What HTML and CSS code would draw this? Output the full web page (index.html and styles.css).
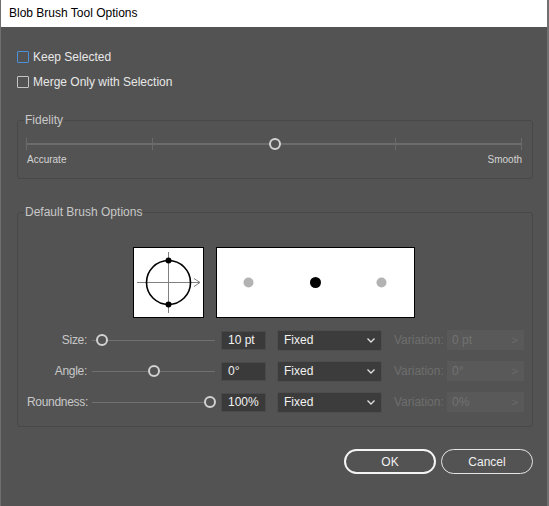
FILE: index.html
```html
<!DOCTYPE html>
<html lang="en">
<head>
    <meta charset="UTF-8">
    <title>Blob Brush Tool Options</title>
    <link rel="stylesheet" href="styles.css">
</head>
<body>
    <div class="window">
        <div class="titlebar">Blob Brush Tool Options</div>
        <div class="content">
            <label class="check-row"><span class="check focus"></span>Keep Selected</label>
            <label class="check-row"><span class="check"></span>Merge Only with Selection</label>

            <fieldset class="group fidelity">
                <legend>Fidelity</legend>
                <div class="slider wide">
                    <span class="tick" style="left: 0%"></span>
                    <span class="tick" style="left: 25.5%"></span>
                    <span class="tick" style="left: 74.5%"></span>
                    <span class="tick" style="left: 100%"></span>
                    <span class="knob" style="left: 50%"></span>
                </div>
                <div class="fid-labels">
                    <span>Accurate</span>
                    <span>Smooth</span>
                </div>
            </fieldset>

            <fieldset class="group brush">
                <legend>Default Brush Options</legend>
                <div class="previews">
                    <div class="preview shape">
                        <svg width="69" height="69" viewBox="0 0 69 69">
                            <line x1="3" y1="34.5" x2="66" y2="34.5" stroke="#808080" stroke-width="1"/>
                            <line x1="34.5" y1="4" x2="34.5" y2="65" stroke="#808080" stroke-width="1"/>
                            <polyline points="60,30.5 66,34.5 60,38.5" fill="none" stroke="#808080" stroke-width="1"/>
                            <circle cx="34.5" cy="34.5" r="22" fill="none" stroke="#000" stroke-width="1.6"/>
                            <circle cx="34.5" cy="12.5" r="3" fill="#000"/>
                            <circle cx="34.5" cy="56.5" r="3" fill="#000"/>
                        </svg>
                    </div>
                    <div class="preview strokes">
                        <svg width="197" height="69" viewBox="0 0 197 69">
                            <circle cx="31.5" cy="34.5" r="5" fill="#b3b3b3"/>
                            <circle cx="98.5" cy="34.5" r="5.5" fill="#000"/>
                            <circle cx="164.5" cy="34.5" r="5" fill="#b3b3b3"/>
                        </svg>
                    </div>
                </div>

                <div class="opt-row">
                    <span class="opt-label">Size:</span>
                    <div class="slider small"><span class="knob" style="left: 8%"></span></div>
                    <div class="field">10 pt</div>
                    <div class="select">Fixed<svg class="chev" width="8" height="5" viewBox="0 0 8 5"><polyline points="0.5,0.5 4,4 7.5,0.5" fill="none" stroke="#e0e0e0" stroke-width="1.3"/></svg></div>
                    <span class="var-label">Variation:</span>
                    <div class="var-field">0 pt<span class="arrow">&gt;</span></div>
                </div>
                <div class="opt-row">
                    <span class="opt-label">Angle:</span>
                    <div class="slider small"><span class="knob" style="left: 50.5%"></span></div>
                    <div class="field">0°</div>
                    <div class="select">Fixed<svg class="chev" width="8" height="5" viewBox="0 0 8 5"><polyline points="0.5,0.5 4,4 7.5,0.5" fill="none" stroke="#e0e0e0" stroke-width="1.3"/></svg></div>
                    <span class="var-label">Variation:</span>
                    <div class="var-field">0°<span class="arrow">&gt;</span></div>
                </div>
                <div class="opt-row">
                    <span class="opt-label">Roundness:</span>
                    <div class="slider small"><span class="knob" style="left: 96%"></span></div>
                    <div class="field">100%</div>
                    <div class="select">Fixed<svg class="chev" width="8" height="5" viewBox="0 0 8 5"><polyline points="0.5,0.5 4,4 7.5,0.5" fill="none" stroke="#e0e0e0" stroke-width="1.3"/></svg></div>
                    <span class="var-label">Variation:</span>
                    <div class="var-field">0%<span class="arrow">&gt;</span></div>
                </div>
            </fieldset>

            <div class="buttons">
                <button class="btn ok">OK</button>
                <button class="btn">Cancel</button>
            </div>
        </div>
    </div>
</body>
</html>
```

FILE: styles.css
```css
* {
    margin: 0;
    padding: 0;
    box-sizing: border-box;
}

body {
    font-family: 'Liberation Sans', Arial, sans-serif;
    font-size: 12px;
    background: #535353;
    width: 549px;
    height: 506px;
    overflow: hidden;
}

.window {
    height: 506px;
    border-left: 1px solid #6f6f6f;
    border-right: 2px solid #707070;
    background: #535353;
}

.titlebar {
    height: 27px;
    line-height: 27px;
    padding-left: 8px;
    background: #ffffff;
    color: #000000;
}

.content {
    padding: 17px 14px 0 16px;
}

.check-row {
    display: flex;
    align-items: center;
    height: 25px;
    color: #e8e8e8;
}

.check {
    width: 12px;
    height: 12px;
    margin-right: 4px;
    border: 1px solid #c4c4c4;
    border-radius: 1px;
}

.check.focus {
    border-color: #4f8fd8;
}

.group {
    border: 1px solid #484848;
    border-radius: 3px;
}

.group legend {
    margin-left: -3px;
    padding: 0 1px;
    line-height: 14px;
    color: #c8c8c8;
}

.fidelity {
    margin-top: 19px;
    padding: 10px 10px 12px 9px;
}

.slider {
    position: relative;
    height: 14px;
}

.slider::before {
    content: "";
    position: absolute;
    left: 0;
    right: 0;
    top: 6px;
    height: 2px;
    background: #6c6c6c;
}

.tick {
    position: absolute;
    top: 1px;
    width: 1px;
    height: 12px;
    margin-left: -1px;
    background: #6a6a6a;
}

.knob {
    position: absolute;
    top: 1px;
    width: 12px;
    height: 12px;
    margin-left: -6px;
    border: 2px solid #d2d2d2;
    border-radius: 50%;
    background: #535353;
}

.fid-labels {
    display: flex;
    justify-content: space-between;
    margin-top: 3px;
    font-size: 10px;
    line-height: 12px;
    color: #d4d4d4;
}

.brush {
    margin-top: 26px;
    padding: 28px 8px 14px 9px;
}

.previews {
    display: flex;
    justify-content: center;
    gap: 12px;
    margin-bottom: 12px;
    padding-right: 4px;
}

.preview {
    height: 71px;
    border: 1px solid #000000;
    background: #ffffff;
}

.preview svg {
    display: block;
}

.opt-row {
    display: flex;
    align-items: center;
    height: 20px;
    margin-bottom: 11px;
}

.opt-row:last-child {
    margin-bottom: 0;
}

.opt-label {
    width: 60px;
    text-align: right;
    white-space: nowrap;
    letter-spacing: -0.3px;
    color: #c8c8c8;
}

.slider.small {
    width: 123px;
    margin-left: 5px;
}

.slider.small::before {
    height: 1px;
    top: 7px;
    background: #707070;
}

.field {
    width: 45px;
    height: 19px;
    margin-left: 6px;
    padding-left: 6px;
    line-height: 17px;
    border: 1px solid #4a4a4a;
    background: #3a3a3a;
    color: #f2f2f2;
}

.select {
    display: flex;
    align-items: center;
    justify-content: space-between;
    width: 105px;
    height: 21px;
    margin-left: 11px;
    padding: 0 6px 0 6px;
    border: 1px solid #4e4e4e;
    border-radius: 2px;
    background: #3c3c3c;
    color: #f2f2f2;
}

.var-label {
    margin-left: 12px;
    width: 53px;
    color: #6e6e6e;
}

.var-field {
    display: flex;
    justify-content: space-between;
    align-items: center;
    width: 77px;
    height: 20px;
    padding: 0 6px 0 5px;
    background: #595959;
    color: #727272;
}

.var-field .arrow {
    font-size: 11px;
    color: #6a6a6a;
}

.buttons {
    display: flex;
    justify-content: flex-end;
    gap: 5px;
    margin-top: 22px;
}

.btn {
    width: 92px;
    height: 25px;
    border: 1px solid #e6e6e6;
    border-radius: 13px;
    background: transparent;
    color: #f0f0f0;
    font-family: inherit;
    font-size: 12px;
}

.btn.ok {
    border: 2px solid #f4f4f4;
}
```
